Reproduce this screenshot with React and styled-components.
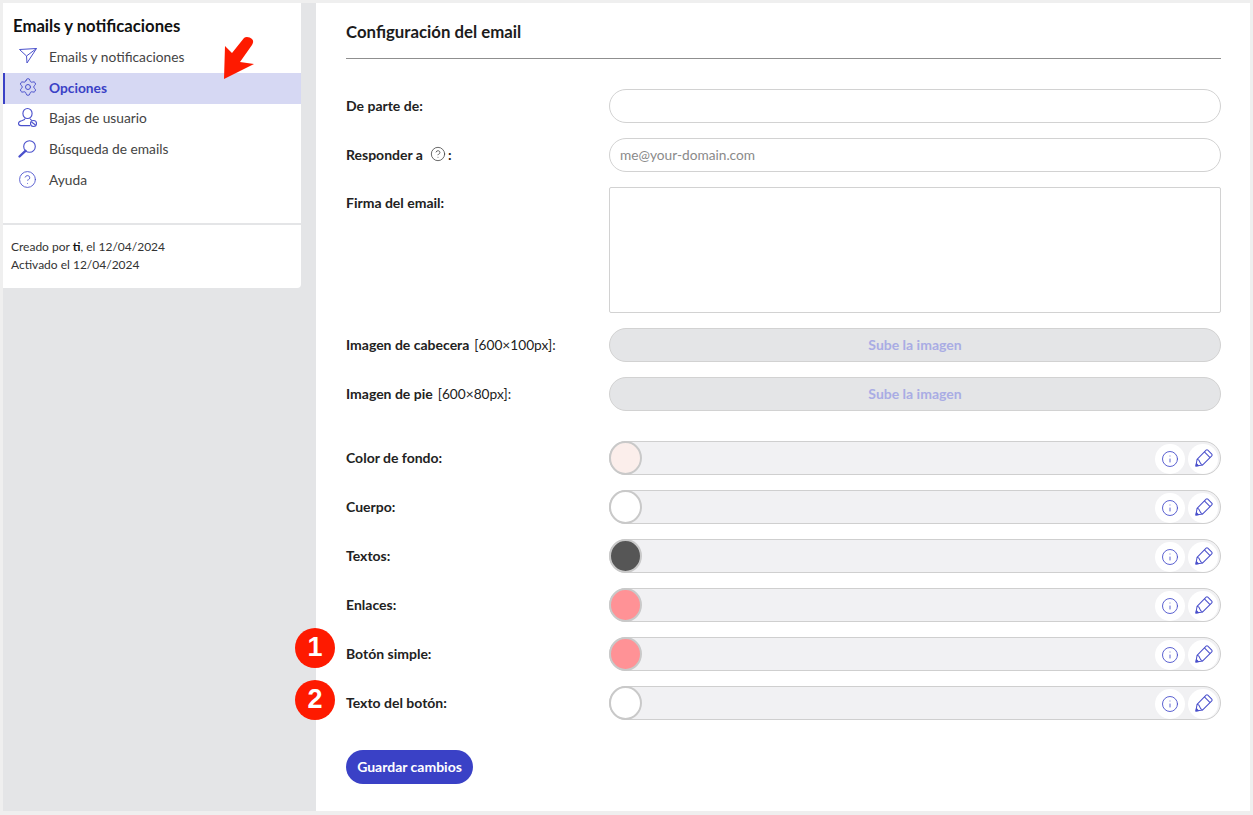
import React from "react";
import styled, { createGlobalStyle } from "styled-components";
import { Settings, CircleHelp, Info } from "lucide-react";

const Global = createGlobalStyle`
  html, body { margin: 0; padding: 0; background: #efefef; }
  body { font-family: Lato, "Noto Sans", sans-serif; color: #222; }
  * { box-sizing: border-box; }
`;

const Page = styled.div`
  width: 1253px;
  height: 815px;
  padding: 3px 3px 4px 3px;
  display: flex;
  position: relative;
  overflow: hidden;
`;

const Side = styled.aside`
  width: 313px;
  background: #e4e5e7;
  padding-right: 15px;
`;

const SideCard = styled.div`
  height: 285px;
  background: #fff;
  border-radius: 0 0 4px 0;
  display: flex;
  flex-direction: column;
  position: relative;
`;

const SideTitle = styled.h2`
  margin: 0;
  padding: 13px 0 0 10px;
  height: 39px;
  font-size: 16.7px;
  line-height: 20px;
  font-weight: 700;
  color: #111;
`;

const NavList = styled.nav`
  display: flex;
  flex-direction: column;
  height: 181px;
`;

const NavItem = styled.a`
  height: 30.8px;
  display: flex;
  align-items: center;
  gap: 13px;
  padding-left: ${p => (p.$active ? "14px" : "16px")};
  padding-bottom: 2px;
  font-size: 13.75px;
  color: ${p => (p.$active ? "#3a41c6" : "#444")};
  font-weight: ${p => (p.$active ? 700 : 400)};
  background: ${p => (p.$active ? "#d6d8f3" : "transparent")};
  border-left: ${p => (p.$active ? "2px solid #3a41c6" : "none")};
`;

const NavIcon = styled.span`
  width: 17px;
  height: 18px;
  flex: none;
  display: flex;
  align-items: center;
  justify-content: center;
  color: #4a50cc;
  svg { display: block; overflow: visible; flex: none; }
`;

const SideFooter = styled.div`
  border-top: 2px solid #e4e5e7;
  padding: 13px 0 0 8px;
  font-size: 12px;
  line-height: 18px;
  color: #333;
  b { font-weight: 700; color: #111; }
`;

const Main = styled.main`
  flex: 1;
  background: #fff;
  padding: 0 29px 0 30px;
`;

const Heading = styled.h1`
  margin: 0 0 30px;
  height: 56px;
  padding-top: 20px;
  font-size: 16.8px;
  line-height: 18px;
  font-weight: 700;
  color: #1c1c1c;
  border-bottom: 1px solid #8f8f8f;
`;

const Form = styled.form`
  display: flex;
  flex-direction: column;
  gap: 15px;
`;

const Row = styled.div`
  display: grid;
  grid-template-columns: 263px 612px;
  align-items: ${p => (p.$top ? "start" : "center")};
  position: relative;
  margin-top: ${p => (p.$spaced ? "15px" : "0")};
`;

const Label = styled.label`
  font-size: 14px;
  font-weight: 700;
  color: #222;
  display: flex;
  align-items: center;
  padding-top: ${p => (p.$top ? "7px" : "0")};
  padding-bottom: ${p => (p.$top ? "0" : "2px")};
  span {
    font-weight: 400;
    margin-left: 5px;
    font-size: 13.7px;
  }
  svg { margin: 0 2px 0 7px; color: #444; }
`;

const TextField = styled.input`
  height: 34px;
  width: 100%;
  border: 1.5px solid #d2d2d2;
  border-radius: 17px;
  background: #fff;
  padding: 0 10px 2px;
  font: 400 13.7px Lato, sans-serif;
  outline: none;
  &::placeholder { color: #8a8a8a; opacity: 1; }
`;

const TextArea = styled.textarea`
  height: 126px;
  width: 100%;
  display: block;
  border: 1.5px solid #d2d2d2;
  border-radius: 2px;
  background: #fff;
  resize: none;
  outline: none;
`;

const UploadButton = styled.button`
  height: 34px;
  width: 100%;
  border: 1.5px solid #d2d2d2;
  border-radius: 17px;
  background: #e4e5e7;
  color: #a9ace4;
  padding: 0 0 2px;
  font: 700 14px Lato, sans-serif;
`;

const ColorField = styled.div`
  height: 34px;
  border: 1.5px solid #cfcfcf;
  border-radius: 17px;
  background: #f1f1f3;
  display: flex;
  align-items: center;
  justify-content: space-between;
  position: relative;
  padding-right: 2px;
`;

const Swatch = styled.div`
  width: 33px;
  height: 34px;
  margin-left: -1.5px;
  border-radius: 50%;
  border: 2px solid #c9c9c9;
  background: ${p => p.$color};
`;

const FieldTools = styled.div`
  display: flex;
  gap: 3px;
  padding-top: 1px;
`;

const ToolButton = styled.div`
  width: 30px;
  height: 30px;
  border-radius: 50%;
  background: #fff;
  color: #4a50cc;
  display: flex;
  align-items: center;
  justify-content: center;
  svg { overflow: visible; }
`;

const SaveButton = styled.button`
  margin-top: 15px;
  align-self: flex-start;
  width: 127px;
  height: 34px;
  border: none;
  border-radius: 17px;
  background: #3a41c6;
  color: #fff;
  padding: 0 0 2px;
  font: 700 14px Lato, sans-serif;
`;

const Badge = styled.div`
  position: absolute;
  left: -51px;
  top: ${p => p.$top}px;
  width: 40px;
  height: 40px;
  border-radius: 50%;
  background: #fe1a00;
  color: #fff;
  padding-bottom: 2px;
  font: 700 27px "Liberation Sans", sans-serif;
  display: flex;
  align-items: center;
  justify-content: center;
`;

const ArrowMark = styled.svg`
  position: absolute;
  left: 218px;
  top: 31px;
  width: 36px;
  height: 46px;
`;

const PlaneIcon = () => (
  <svg width="18" height="16" viewBox="0 0 18 16" fill="none" stroke="currentColor" strokeWidth="1" strokeLinejoin="round">
    <path d="M0.5 1.5 L17.5 0.5 L8 15 L7.5 8 Z" />
    <path d="M7.5 8 L17.5 0.5" />
  </svg>
);

const UserOffIcon = () => (
  <svg width="19" height="19" viewBox="0 0 19 19" fill="none" stroke="currentColor" strokeWidth="1.1">
    <ellipse cx="9.5" cy="5.5" rx="4.6" ry="5" />
    <path d="M7 10.5 C7 12 5 12.3 3.5 12.8 C1.5 13.4 0.5 14.4 0.5 15.6 C0.5 17 1.6 17.6 3 17.6 H12" />
    <path d="M12 10.5 C12.2 11.6 13 12 14 12.4" />
    <circle cx="15.5" cy="15.5" r="3" fill="#fff" />
    <path d="M13.5 14 L17.5 17" />
  </svg>
);

const SearchIcon = () => (
  <svg width="19" height="18" viewBox="0 0 19 18" fill="none" stroke="currentColor">
    <circle cx="11.5" cy="6.5" r="5.8" strokeWidth="1.1" />
    <path d="M7.5 10.8 L1.5 16.5" strokeWidth="2.4" strokeLinecap="round" />
  </svg>
);

const PencilIcon = () => (
  <svg width="16" height="16" viewBox="0 0 20 20" fill="none" stroke="currentColor" strokeWidth="1.3" strokeLinejoin="round">
    <g transform="rotate(45 10 10)">
      <path d="M5 -0.5 Q5 -2 6.5 -2 H13.5 Q15 -2 15 -0.5 V15.5 L10 22.5 L5 15.5 Z" />
      <path d="M5 2.5 H15" />
      <path d="M5 15.5 Q7.5 14 10 15.5 Q12.5 17 15 15.5" />
      <path d="M8.3 20 L10 22.5 L11.7 20 Z" fill="currentColor" />
    </g>
  </svg>
);

const navItems = [
  { label: "Emails y notificaciones", icon: <PlaneIcon /> },
  { label: "Opciones", icon: <Settings size={20} strokeWidth={1.2} />, active: true },
  { label: "Bajas de usuario", icon: <UserOffIcon /> },
  { label: "Búsqueda de emails", icon: <SearchIcon /> },
  { label: "Ayuda", icon: <CircleHelp size={19} strokeWidth={1.1} /> },
];

const colorRows = [
  { label: "Color de fondo:", color: "#fbeeeb" },
  { label: "Cuerpo:", color: "#fff" },
  { label: "Textos:", color: "#565656" },
  { label: "Enlaces:", color: "#ff9296" },
  { label: "Botón simple:", color: "#ff9296", badge: "1", badgeTop: -9 },
  { label: "Texto del botón:", color: "#fff", badge: "2", badgeTop: -6 },
];

const App = () => (
  <Page>
    <Global />
    <Side>
      <SideCard>
        <SideTitle>Emails y notificaciones</SideTitle>
        <NavList>
          {navItems.map(item => (
            <NavItem key={item.label} $active={item.active}>
              <NavIcon>{item.icon}</NavIcon>
              {item.label}
            </NavItem>
          ))}
        </NavList>
        <SideFooter>
          Creado por <b>ti</b>, el 12/04/2024
          <br />
          Activado el 12/04/2024
        </SideFooter>
        <ArrowMark viewBox="0 0 36 46">
          <path
            d="M3 45 L4 12 L11 19 L23 4 C25 2 29 3 31 5 C33 7 32 9 31 11 L19 28 L33 30 Z"
            fill="#fe1a00"
          />
        </ArrowMark>
      </SideCard>
    </Side>
    <Main>
      <Heading>Configuración del email</Heading>
      <Form>
        <Row>
          <Label>De parte de:</Label>
          <TextField />
        </Row>
        <Row>
          <Label>
            Responder a
            <CircleHelp size={16} strokeWidth={1.2} />:
          </Label>
          <TextField placeholder="me@your-domain.com" />
        </Row>
        <Row $top>
          <Label $top>Firma del email:</Label>
          <TextArea />
        </Row>
        <Row>
          <Label>
            Imagen de cabecera <span>[600×100px]:</span>
          </Label>
          <UploadButton type="button">Sube la imagen</UploadButton>
        </Row>
        <Row>
          <Label>
            Imagen de pie <span>[600×80px]:</span>
          </Label>
          <UploadButton type="button">Sube la imagen</UploadButton>
        </Row>
        {colorRows.map((row, i) => (
          <Row key={row.label} $spaced={i === 0}>
            {row.badge && <Badge $top={row.badgeTop}>{row.badge}</Badge>}
            <Label>{row.label}</Label>
            <ColorField>
              <Swatch $color={row.color} />
              <FieldTools>
                <ToolButton>
                  <Info size={18} strokeWidth={1.2} />
                </ToolButton>
                <ToolButton>
                  <PencilIcon />
                </ToolButton>
              </FieldTools>
            </ColorField>
          </Row>
        ))}
        <SaveButton type="button">Guardar cambios</SaveButton>
      </Form>
    </Main>
  </Page>
);

export default App;
